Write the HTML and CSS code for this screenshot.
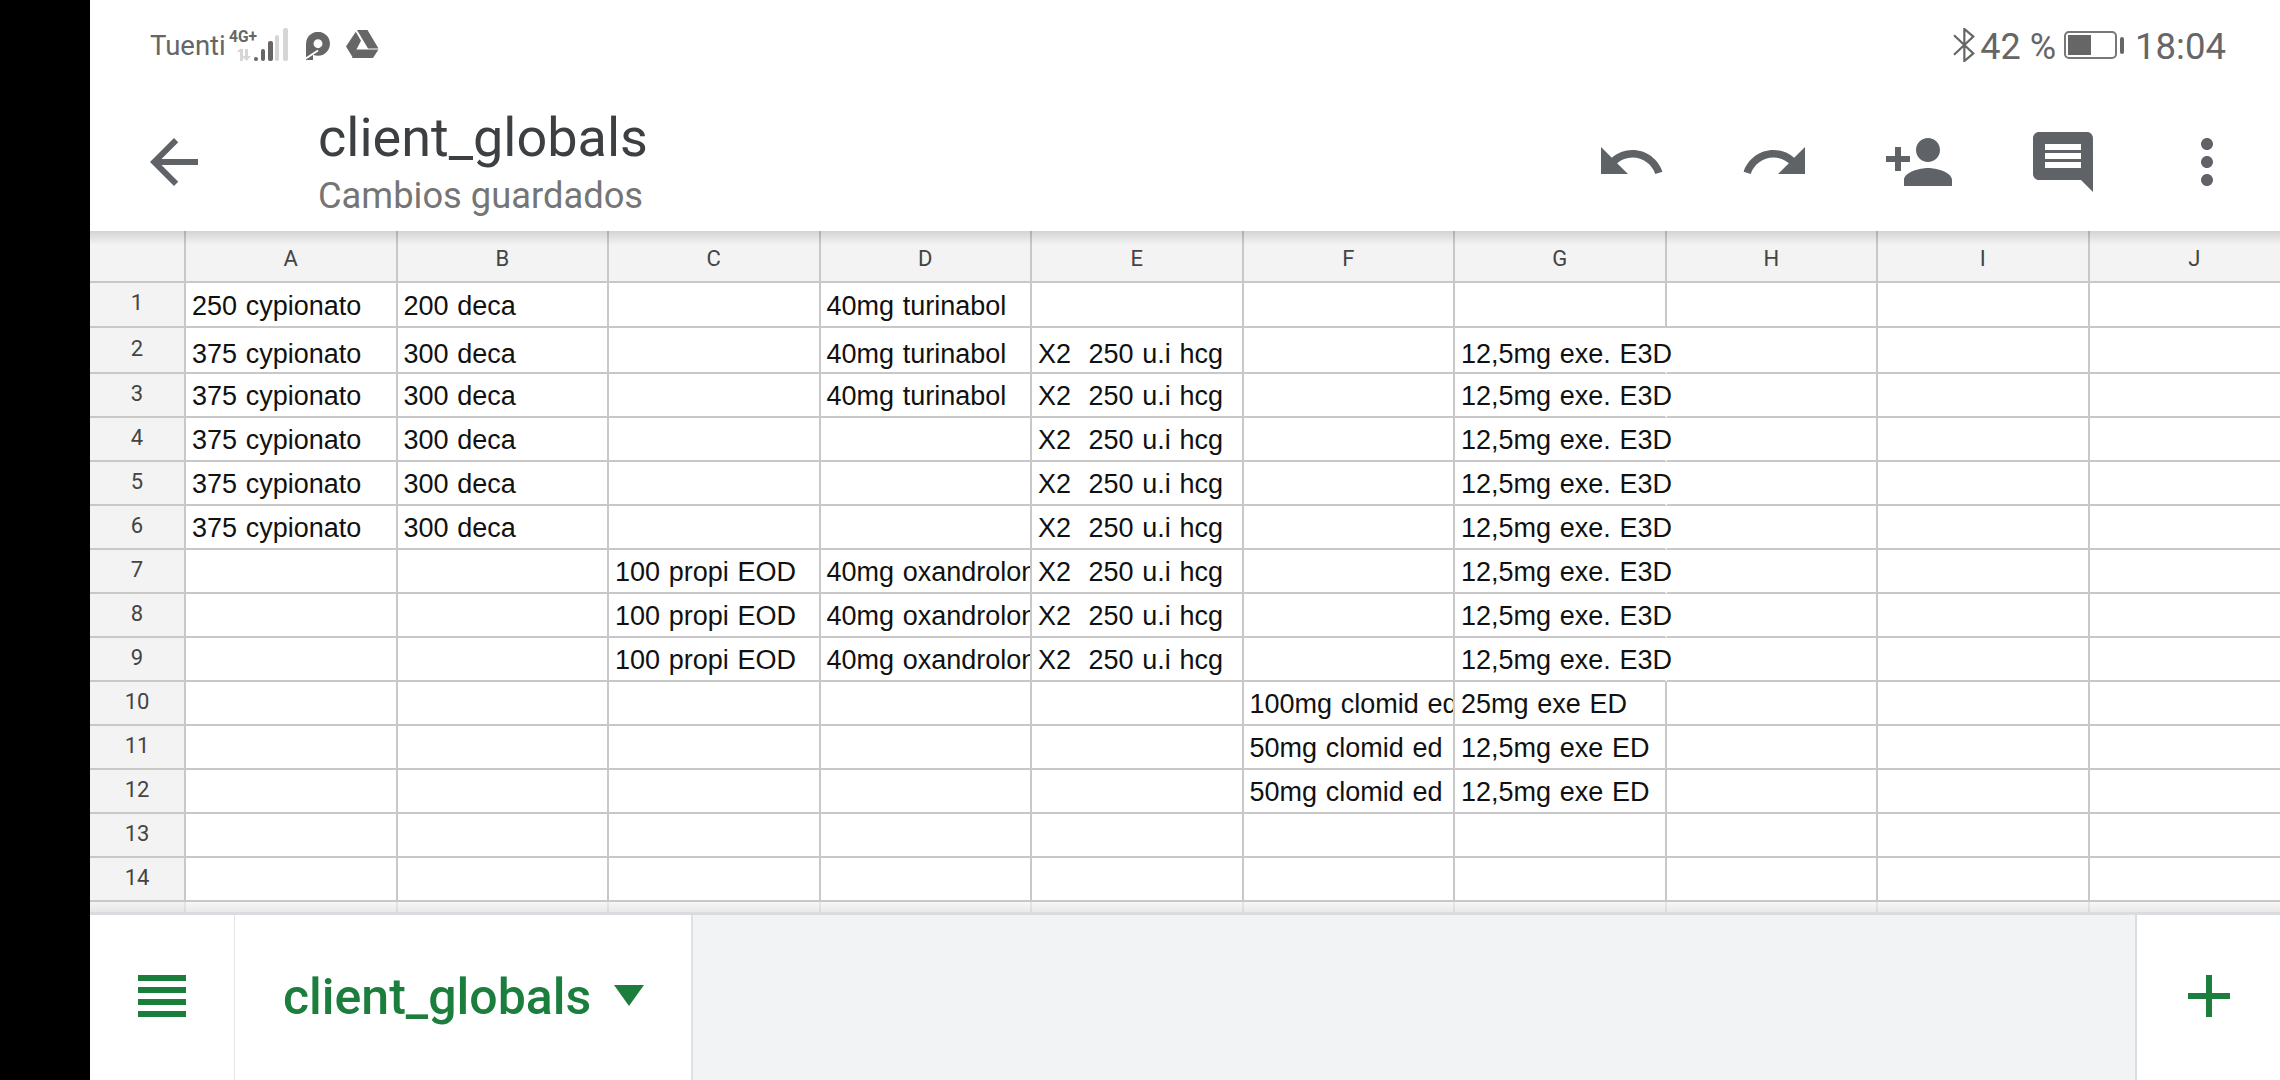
FILE: index.html
```html
<!DOCTYPE html>
<html lang="es">
<head>
<meta charset="utf-8">
<title>client_globals</title>
<link rel="stylesheet" href="styles.css">
</head>
<body>
<div class="screen">
  <div class="bezel"></div>
  <div class="app">
    <header class="top">
      <div class="status">
        <div class="status-left">
          <span class="carrier">Tuenti</span>
          <svg class="signal" width="60" height="34" viewBox="0 0 60 34">
            <text class="net" x="0" y="14" textLength="28" lengthAdjust="spacingAndGlyphs">4G+</text>
            <path class="faint" d="M11 21h3v12h-3zM8 24l3.500-4v4zM16 21h3v7h3l-4.500 5-4.500-5h3z"/>
            <rect class="on" x="25" y="29" width="4" height="4" rx="2"/>
            <rect class="on" x="32" y="21" width="4" height="12" rx="2"/>
            <rect class="on" x="39" y="13" width="5" height="20" rx="2"/>
            <rect class="faint" x="46" y="7" width="4" height="26" rx="2"/>
            <rect class="faint" x="54" y="0" width="5" height="33" rx="2"/>
          </svg>
          <svg class="pocket" width="24" height="28" viewBox="0 0 24 28">
            <circle class="pocket-ring" cx="12" cy="11.700" r="8.200"/>
            <path class="pocket-stem" d="M3.500 12V28"/>
            <path class="pocket-cut" d="M-1 27L12 18.500"/>
          </svg>
          <svg class="drive" width="33" height="28" viewBox="0 0 33 28">
            <path class="ink" d="M11 0h10.500l11 18.500h-10.500zM9.800 1.800l5.200 9L6.500 27 0 16.500zM10.500 19.500h22L27 28H6z"/>
          </svg>
        </div>
        <div class="status-right">
          <svg class="bt" width="22" height="34" viewBox="5 2 13 20">
            <path class="bt-line" d="M5.600 6.200L17 17 11.700 21.500V2.500L17 7 5.600 17.800"/>
          </svg>
          <span class="pct">42 %</span>
          <svg class="battery" width="60" height="28" viewBox="0 0 60 28">
            <rect class="batt-shell" x="1" y="1" width="51" height="26" rx="4"/>
            <rect class="ink" x="4" y="4" width="23" height="20"/>
            <rect class="ink" x="56" y="6" width="4" height="17" rx="2"/>
          </svg>
          <span class="clock">18:04</span>
        </div>
      </div>
      <div class="toolbar">
        <svg class="icon back" viewBox="0 0 24 24"><path d="M20 11H7.830l5.590-5.590L12 4l-8 8 8 8 1.410-1.410L7.830 13H20v-2z"/></svg>
        <div class="titles">
          <div class="doc-title">client_globals</div>
          <div class="doc-sub">Cambios guardados</div>
        </div>
        <div class="actions">
          <svg class="icon" viewBox="0 0 24 24"><path d="M12.500 8c-2.650 0-5.050.99-6.900 2.600L2 7v9h9l-3.620-3.620c1.390-1.160 3.160-1.880 5.120-1.880 3.540 0 6.550 2.310 7.600 5.500l2.370-.78C21.080 11.030 17.150 8 12.500 8z"/></svg>
          <svg class="icon" viewBox="0 0 24 24"><path d="M18.400 10.600C16.550 8.990 14.150 8 11.500 8c-4.650 0-8.580 3.030-9.960 7.220L3.900 16c1.050-3.190 4.050-5.500 7.600-5.500 1.950 0 3.730.72 5.120 1.880L13 16h9V7l-3.600 3.600z"/></svg>
          <svg class="icon" viewBox="0 0 24 24"><path d="M15 12c2.210 0 4-1.790 4-4s-1.790-4-4-4-4 1.790-4 4 1.790 4 4 4zm-9-2V7H4v3H1v2h3v3h2v-3h3v-2H6zm9 4c-2.670 0-8 1.340-8 4v2h16v-2c0-2.660-5.330-4-8-4z"/></svg>
          <svg class="icon" viewBox="0 0 24 24"><path d="M21.990 4c0-1.100-.89-2-1.990-2H4c-1.100 0-2 .9-2 2v12c0 1.100.9 2 2 2h14l4 4-.01-18zM18 14H6v-2h12v2zm0-3H6V9h12v2zm0-3H6V6h12v2z"/></svg>
          <svg class="icon" viewBox="0 0 24 24"><path d="M12 8c1.100 0 2-.9 2-2s-.9-2-2-2-2 .9-2 2 .9 2 2 2zm0 2c-1.100 0-2 .9-2 2s.9 2 2 2 2-.9 2-2-.9-2-2-2zm0 6c-1.100 0-2 .9-2 2s.9 2 2 2 2-.9 2-2-.9-2-2-2z"/></svg>
        </div>
      </div>
    </header>

    <main class="sheet">
      <div class="grid">
        <div class="h"></div><div class="h">A</div><div class="h">B</div><div class="h">C</div><div class="h">D</div><div class="h">E</div><div class="h">F</div><div class="h">G</div><div class="h">H</div><div class="h">I</div><div class="h">J</div>

        <div class="n">1</div><div class="c r1">250 cypionato</div><div class="c r1">200 deca</div><div class="c"></div><div class="c r1">40mg turinabol</div><div class="c"></div><div class="c"></div><div class="c"></div><div class="c"></div><div class="c"></div><div class="c"></div>
        <div class="n">2</div><div class="c r2">375 cypionato</div><div class="c r2">300 deca</div><div class="c"></div><div class="c r2">40mg turinabol</div><div class="c r2">X2  250 u.i hcg</div><div class="c"></div><div class="c r2 spill">12,5mg exe. E3D</div><div class="c"></div><div class="c"></div><div class="c"></div>
        <div class="n">3</div><div class="c">375 cypionato</div><div class="c">300 deca</div><div class="c"></div><div class="c">40mg turinabol</div><div class="c">X2  250 u.i hcg</div><div class="c"></div><div class="c spill">12,5mg exe. E3D</div><div class="c"></div><div class="c"></div><div class="c"></div>
        <div class="n">4</div><div class="c">375 cypionato</div><div class="c">300 deca</div><div class="c"></div><div class="c"></div><div class="c">X2  250 u.i hcg</div><div class="c"></div><div class="c spill">12,5mg exe. E3D</div><div class="c"></div><div class="c"></div><div class="c"></div>
        <div class="n">5</div><div class="c">375 cypionato</div><div class="c">300 deca</div><div class="c"></div><div class="c"></div><div class="c">X2  250 u.i hcg</div><div class="c"></div><div class="c spill">12,5mg exe. E3D</div><div class="c"></div><div class="c"></div><div class="c"></div>
        <div class="n">6</div><div class="c">375 cypionato</div><div class="c">300 deca</div><div class="c"></div><div class="c"></div><div class="c">X2  250 u.i hcg</div><div class="c"></div><div class="c spill">12,5mg exe. E3D</div><div class="c"></div><div class="c"></div><div class="c"></div>
        <div class="n">7</div><div class="c"></div><div class="c"></div><div class="c">100 propi EOD</div><div class="c">40mg oxandrolona</div><div class="c">X2  250 u.i hcg</div><div class="c"></div><div class="c spill">12,5mg exe. E3D</div><div class="c"></div><div class="c"></div><div class="c"></div>
        <div class="n">8</div><div class="c"></div><div class="c"></div><div class="c">100 propi EOD</div><div class="c">40mg oxandrolona</div><div class="c">X2  250 u.i hcg</div><div class="c"></div><div class="c spill">12,5mg exe. E3D</div><div class="c"></div><div class="c"></div><div class="c"></div>
        <div class="n">9</div><div class="c"></div><div class="c"></div><div class="c">100 propi EOD</div><div class="c">40mg oxandrolona</div><div class="c">X2  250 u.i hcg</div><div class="c"></div><div class="c spill">12,5mg exe. E3D</div><div class="c"></div><div class="c"></div><div class="c"></div>
        <div class="n">10</div><div class="c"></div><div class="c"></div><div class="c"></div><div class="c"></div><div class="c"></div><div class="c">100mg clomid ed</div><div class="c">25mg exe ED</div><div class="c"></div><div class="c"></div><div class="c"></div>
        <div class="n">11</div><div class="c"></div><div class="c"></div><div class="c"></div><div class="c"></div><div class="c"></div><div class="c">50mg clomid ed</div><div class="c">12,5mg exe ED</div><div class="c"></div><div class="c"></div><div class="c"></div>
        <div class="n">12</div><div class="c"></div><div class="c"></div><div class="c"></div><div class="c"></div><div class="c"></div><div class="c">50mg clomid ed</div><div class="c">12,5mg exe ED</div><div class="c"></div><div class="c"></div><div class="c"></div>
        <div class="n">13</div><div class="c"></div><div class="c"></div><div class="c"></div><div class="c"></div><div class="c"></div><div class="c"></div><div class="c"></div><div class="c"></div><div class="c"></div><div class="c"></div>
        <div class="n">14</div><div class="c"></div><div class="c"></div><div class="c"></div><div class="c"></div><div class="c"></div><div class="c"></div><div class="c"></div><div class="c"></div><div class="c"></div><div class="c"></div>
        <div class="n"></div><div class="c"></div><div class="c"></div><div class="c"></div><div class="c"></div><div class="c"></div><div class="c"></div><div class="c"></div><div class="c"></div><div class="c"></div><div class="c"></div>
      </div>
      <div class="shade-top"></div>
      <div class="shade-bottom"></div>
    </main>

    <footer class="tabs">
      <div class="menu">
        <svg class="green-icon" width="48" height="42" viewBox="0 0 48 42"><path d="M0 0h48v6H0zM0 12h48v6H0zM0 24h48v6H0zM0 36h48v6H0z"/></svg>
      </div>
      <div class="tab">
        <span class="tab-name">client_globals</span>
        <svg class="green-icon caret" width="30" height="21" viewBox="0 0 30 21"><path d="M0 0h30L15 21z"/></svg>
      </div>
      <div class="tab-rest"></div>
      <div class="add">
        <svg class="green-icon" width="42" height="42" viewBox="0 0 42 42"><path d="M18 0h6v18h18v6H24v18h-6V24H0v-6h18z"/></svg>
      </div>
    </footer>
  </div>
</div>
</body>
</html>
```

FILE: styles.css
```css
* { box-sizing: border-box; }
html, body { margin: 0; padding: 0; background: #000; }
body { width: 2280px; height: 1080px; overflow: hidden; font-family: "Roboto", "Liberation Sans", sans-serif; }

.screen { display: flex; width: 2280px; height: 1080px; }
.bezel { width: 90px; flex: none; background: #000; }
.app { flex: 1; min-width: 0; display: flex; flex-direction: column; background: #fff; }

/* top */
.top { height: 231px; flex: none; background: #fff; display: flex; flex-direction: column; }
.status { height: 90px; display: flex; justify-content: space-between; align-items: flex-start; padding: 28px 54px 0 60px; color: #666; }
.status-left, .status-right { display: flex; align-items: flex-start; }
.carrier { font-size: 27.500px; line-height: 30px; margin-top: 3px; width: 79px; }
.net { font: 700 17px "Roboto", sans-serif; fill: #666; }
.signal { display: block; }
.on { fill: #666; }
.faint { fill: #d6d6d6; }
.pocket { margin: 4px 0 0 17px; display: block; }
.pocket-ring { fill: none; stroke: #666; stroke-width: 7.500; }
.pocket-stem { fill: none; stroke: #666; stroke-width: 7; }
.pocket-cut { fill: none; stroke: #fff; stroke-width: 2; }
.drive { margin: 2px 0 0 16px; display: block; }
.ink { fill: #666; }
.bt { display: block; }
.bt-line { fill: none; stroke: #666; stroke-width: 1.300; }
.pct, .clock { line-height: 34px; margin-top: 2px; }
.pct { font-size: 36px; margin-left: 5px; }
.battery { margin: 3px 0 0 8px; display: block; }
.batt-shell { fill: none; stroke: #777; stroke-width: 2; }
.clock { font-size: 36.500px; margin-left: 11px; }

.toolbar { flex: 1; display: flex; align-items: flex-start; padding: 36px 0 0 48px; }
.icon { width: 72px; height: 72px; flex: none; fill: #5f6368; display: block; }
.titles { margin: -20px 0 0 108px; }
.doc-title { font-size: 54px; line-height: 64px; color: #3c4043; }
.doc-sub { font-size: 36.300px; line-height: 44px; color: #757575; margin-top: 4px; }
.actions { margin-left: auto; display: flex; gap: 72px; padding-right: 37px; }

/* sheet */
.sheet { position: relative; height: 681px; flex: none; overflow: hidden; background: #fff; }
.grid {
  display: grid;
  width: 2221px;
  grid-template-columns: 96px repeat(10, 211.500px);
  grid-template-rows: 52px 45px 46px repeat(12, 44px) 44px;
}
.h, .n { background: #f3f3f3; border-right: 2px solid #c8c8c8; border-bottom: 2px solid #c8c8c8; color: #444; font-size: 22px; display: flex; align-items: center; justify-content: center; }
.h { padding-top: 4px; }
.n { padding-bottom: 4px; }
.c {
  border-right: 2px solid #c8c8c8;
  border-bottom: 2px solid #c8c8c8;
  font: 27px/30px "Liberation Sans", Arial, sans-serif;
  color: #111;
  white-space: pre;
  overflow: hidden;
  padding: 0 0 5px 6px;
  display: flex;
  align-items: flex-end;
  word-spacing: 1.200px;
}
.r1 { padding-bottom: 5px; }
.r2 { padding-bottom: 3px; }
.spill { overflow: visible; border-right-color: transparent; }
.shade-top { position: absolute; left: 0; right: 0; top: 0; height: 14px; background: linear-gradient(rgba(0,0,0,.13), rgba(0,0,0,0)); }
.shade-bottom { position: absolute; left: 0; right: 0; bottom: 0; height: 10px; background: linear-gradient(rgba(0,0,0,0), rgba(0,0,0,.06)); background-color: rgba(243,243,243,.7); }

/* bottom */
.tabs { flex: 1; display: flex; background: #fff; border-top: 3px solid #dadce0; }
.menu { width: 145px; flex: none; display: flex; align-items: center; justify-content: center; padding-bottom: 3px; border-right: 1px solid #e4e4e4; }
.tab { width: 458px; flex: none; display: flex; align-items: center; padding: 0 0 1px 48px; border-right: 2px solid #e0e0e0; }
.tab-name { font-size: 50px; line-height: 60px; font-weight: 500; color: #1b7e3c; }
.caret { margin: 0 0 3px 23px; }
.tab-rest { flex: 1; background: #f1f3f4; }
.add { width: 145px; flex: none; border-left: 2px solid #dadce0; display: flex; align-items: center; justify-content: center; padding-bottom: 3px; }
.green-icon { fill: #1b7e3c; display: block; }
```
